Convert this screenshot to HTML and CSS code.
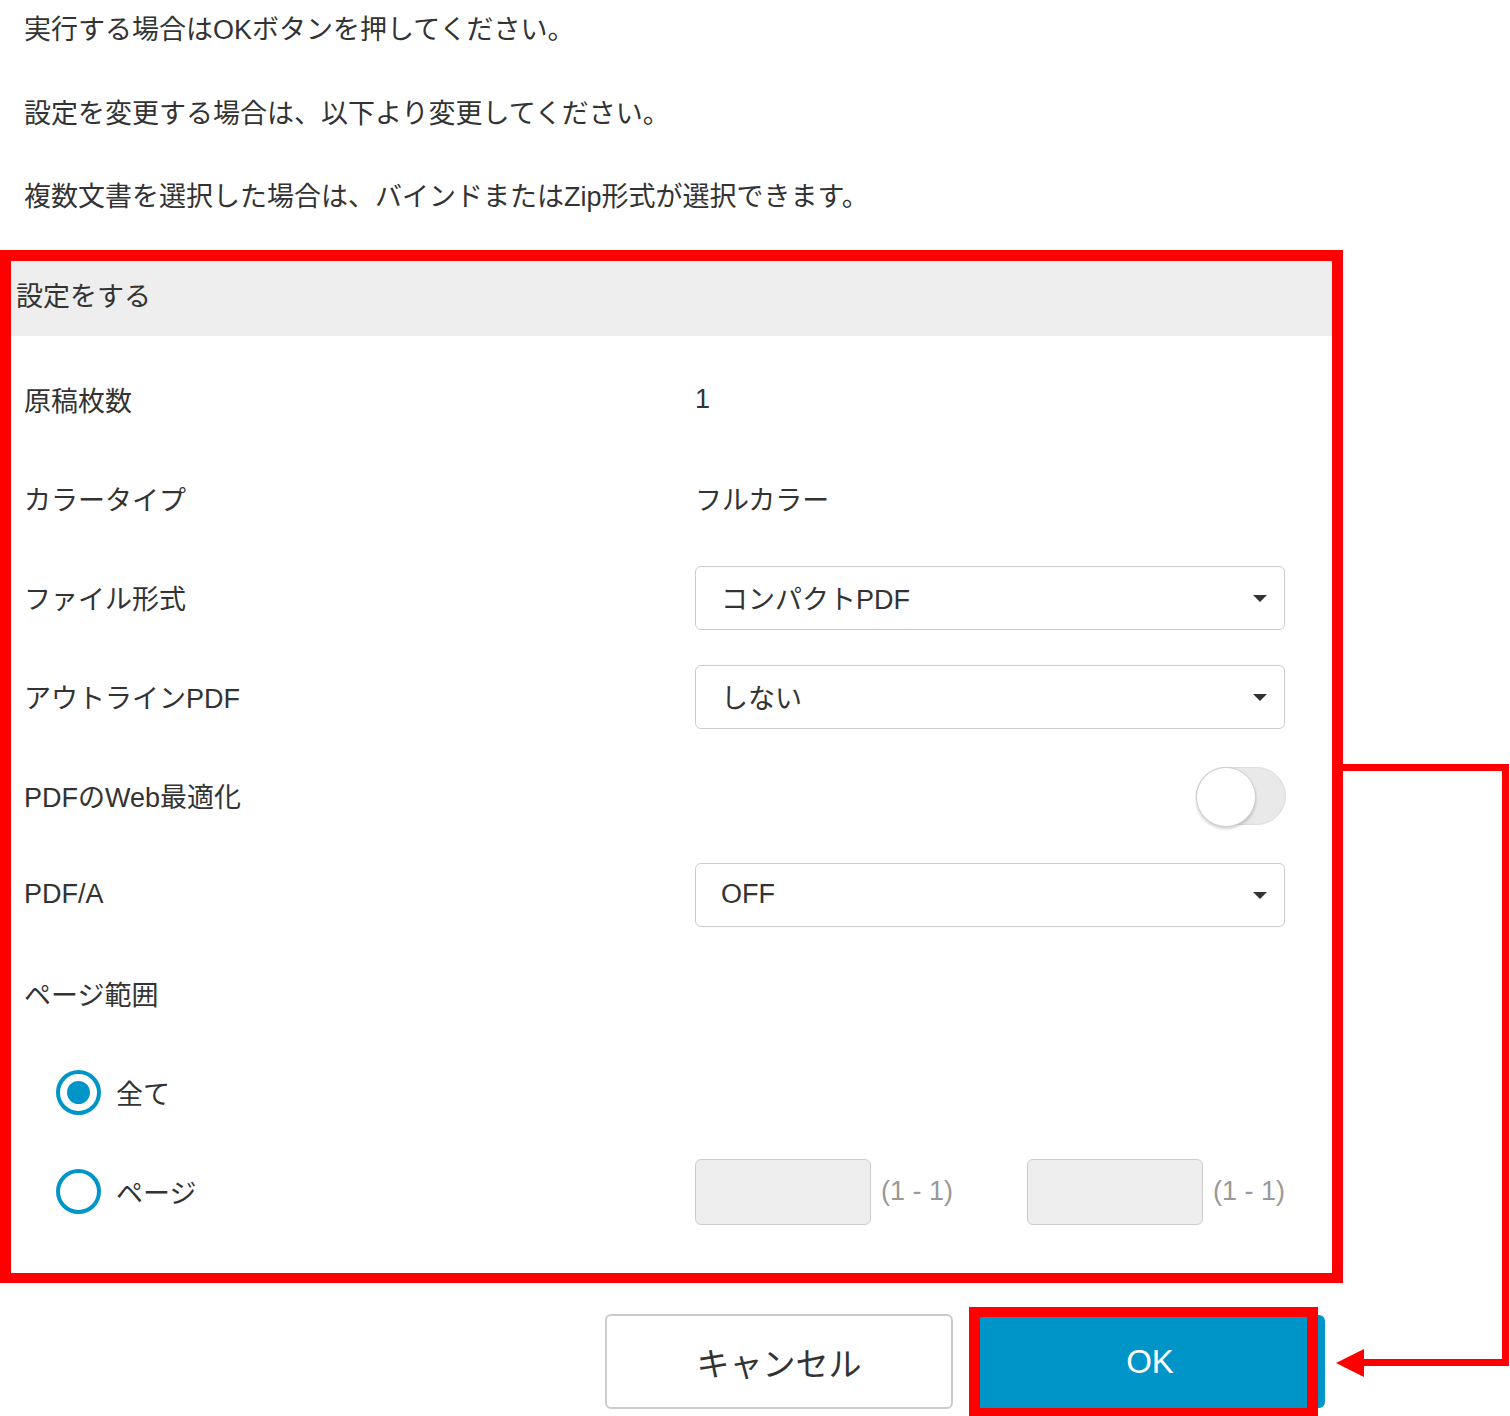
FILE: index.html
```html
<!DOCTYPE html>
<html lang="ja">
<head>
<meta charset="utf-8">
<title>設定</title>
<link rel="stylesheet" href="styles.css">
</head>
<body>
<div class="page">
  <div class="intro">
    <p>実行する場合はOKボタンを押してください。</p>
    <p>設定を変更する場合は、以下より変更してください。</p>
    <p>複数文書を選択した場合は、バインドまたはZip形式が選択できます。</p>
  </div>

  <section class="settings">
    <div class="settings-head">設定をする</div>
    <div class="rows">
      <div class="row">
        <div class="label">原稿枚数</div>
        <div class="value">1</div>
      </div>
      <div class="row">
        <div class="label">カラータイプ</div>
        <div class="value">フルカラー</div>
      </div>
      <div class="row">
        <div class="label">ファイル形式</div>
        <div class="value"><div class="select"><span>コンパクトPDF</span><i class="caret"></i></div></div>
      </div>
      <div class="row">
        <div class="label">アウトラインPDF</div>
        <div class="value"><div class="select"><span>しない</span><i class="caret"></i></div></div>
      </div>
      <div class="row">
        <div class="label">PDFのWeb最適化</div>
        <div class="value value-end"><div class="toggle"><span class="knob"></span></div></div>
      </div>
      <div class="row">
        <div class="label">PDF/A</div>
        <div class="value"><div class="select"><span>OFF</span><i class="caret"></i></div></div>
      </div>
      <div class="row">
        <div class="label">ページ範囲</div>
        <div class="value"></div>
      </div>
      <div class="row">
        <div class="label radio-label"><span class="radio checked"></span>全て</div>
        <div class="value"></div>
      </div>
      <div class="row">
        <div class="label radio-label"><span class="radio"></span>ページ</div>
        <div class="value range">
          <div class="range-group"><span class="range-box"></span><span class="range-text">(1 - 1)</span></div>
          <div class="range-group"><span class="range-box"></span><span class="range-text">(1 - 1)</span></div>
        </div>
      </div>
    </div>
  </section>

  <div class="actions">
    <button class="btn btn-cancel" type="button">キャンセル</button>
    <div class="ok-wrap">
      <button class="btn btn-ok" type="button">OK</button>
      <span class="ok-highlight"></span>
    </div>
  </div>

  <svg class="annotation" width="1510" height="1416" viewBox="0 0 1510 1416" aria-hidden="true">
    <path d="M1343 767.5 H1505.5 V1362.5 H1360" fill="none" stroke="#ff0000" stroke-width="7"/>
    <polygon points="1336,1363 1364,1349 1364,1377" fill="#ff0000"/>
  </svg>
</div>
</body>
</html>
```

FILE: styles.css
```css
* {
  box-sizing: border-box;
}

html, body {
  margin: 0;
  padding: 0;
  background: #ffffff;
}

body {
  font-family: "Liberation Sans", "Noto Sans CJK JP", sans-serif;
  color: #333333;
  font-size: 27px;
}

.page {
  position: relative;
  width: 1510px;
  height: 1416px;
  overflow: hidden;
}

.intro {
  padding: 10px 0 0 24px;
}

.intro p {
  margin: 0 0 43.5px;
  line-height: 40px;
  height: 40px;
  white-space: nowrap;
}

.intro p:last-child {
  margin-bottom: 33px;
}

.settings {
  width: 1343px;
  border: 11px solid #ff0000;
  border-bottom-width: 10px;
}

.settings-head {
  height: 75px;
  line-height: 72px;
  padding-left: 5px;
  background: #eeeeee;
}

.rows {
  padding: 14px 47px 32px 13px;
}

.row {
  display: grid;
  grid-template-columns: 671px 590px;
  align-items: center;
  height: 99px;
}

.label {
  white-space: nowrap;
}

.value {
  display: flex;
  align-items: center;
}

.value-end {
  justify-content: flex-end;
}

.select {
  width: 590px;
  height: 64px;
  border: 1px solid #cccccc;
  border-radius: 6px;
  background: #ffffff;
  display: flex;
  align-items: center;
  justify-content: space-between;
  padding: 0 17px 0 25px;
}

.caret {
  width: 0;
  height: 0;
  border-left: 7px solid transparent;
  border-right: 7px solid transparent;
  border-top: 7px solid #333333;
  margin-top: 2px;
}

.toggle {
  position: relative;
  width: 90px;
  height: 58px;
  border-radius: 29px;
  background: #e9e9e9;
  border: 1px solid #dddddd;
  margin-right: -1px;
}

.knob {
  position: absolute;
  left: -1px;
  top: -1px;
  width: 60px;
  height: 60px;
  border-radius: 50%;
  background: #ffffff;
  border: 1px solid #cfcfcf;
  box-shadow: 0 2px 3px rgba(0, 0, 0, 0.18);
}

.radio-label {
  display: flex;
  align-items: center;
  gap: 15px;
  padding-left: 32px;
}

.radio {
  position: relative;
  width: 45px;
  height: 45px;
  border-radius: 50%;
  border: 4px solid #0095c8;
  background: #ffffff;
  flex: none;
}

.radio.checked::after {
  content: "";
  position: absolute;
  left: 7px;
  top: 7px;
  width: 23px;
  height: 23px;
  border-radius: 50%;
  background: #0095c8;
}

.range {
  justify-content: space-between;
}

.range-group {
  display: flex;
  align-items: center;
  gap: 10px;
}

.range-box {
  display: block;
  width: 176px;
  height: 66px;
  background: #eeeeee;
  border: 1px solid #cccccc;
  border-radius: 6px;
}

.range-text {
  color: #999999;
  white-space: nowrap;
}

.actions {
  display: flex;
  justify-content: flex-end;
  align-items: flex-start;
  gap: 22px;
  width: 1325px;
  margin-top: 31px;
}

.btn {
  font-family: "Liberation Sans", "Noto Sans CJK JP", sans-serif;
  font-size: 33px;
  width: 348px;
  height: 95px;
  border-radius: 6px;
  cursor: pointer;
  padding: 0;
}

.btn-cancel {
  background: #ffffff;
  border: 2px solid #cccccc;
  color: #333333;
}

.ok-wrap {
  position: relative;
  margin-top: 1px;
}

.btn-ok {
  display: block;
  width: 350px;
  height: 93px;
  background: #0095c8;
  border: none;
  color: #ffffff;
}

.ok-highlight {
  position: absolute;
  left: -6px;
  top: -8px;
  width: 349px;
  height: 112px;
  border: 11px solid #ff0000;
  border-top-width: 10px;
}

.annotation {
  position: absolute;
  left: 0;
  top: 0;
  pointer-events: none;
}
```
